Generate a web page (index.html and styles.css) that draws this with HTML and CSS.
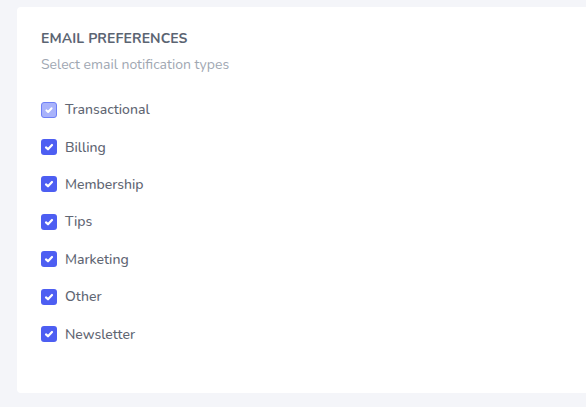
FILE: index.html
```html
<!DOCTYPE html>
<html>
<head>
<meta charset="utf-8">
<link rel="stylesheet" href="styles.css">
</head>
<body>
<div class="card">
  <h2 class="title">EMAIL PREFERENCES</h2>
  <p class="subtitle">Select email notification types</p>
  <ul class="options">
    <li class="option disabled"><span class="box"><svg viewBox="0 0 16 16"><path d="M5 8.4l2 1.9 4-4.3" /></svg></span>Transactional</li>
    <li class="option"><span class="box"><svg viewBox="0 0 16 16"><path d="M5 8.4l2 1.9 4-4.3" /></svg></span>Billing</li>
    <li class="option"><span class="box"><svg viewBox="0 0 16 16"><path d="M5 8.4l2 1.9 4-4.3" /></svg></span>Membership</li>
    <li class="option"><span class="box"><svg viewBox="0 0 16 16"><path d="M5 8.4l2 1.9 4-4.3" /></svg></span>Tips</li>
    <li class="option"><span class="box"><svg viewBox="0 0 16 16"><path d="M5 8.4l2 1.9 4-4.3" /></svg></span>Marketing</li>
    <li class="option"><span class="box"><svg viewBox="0 0 16 16"><path d="M5 8.4l2 1.9 4-4.3" /></svg></span>Other</li>
    <li class="option"><span class="box"><svg viewBox="0 0 16 16"><path d="M5 8.4l2 1.9 4-4.3" /></svg></span>Newsletter</li>
  </ul>
</div>
</body>
</html>
```
FILE: styles.css
```css
html, body {
  margin: 0;
  padding: 0;
  background: #f4f5f9;
  font-family: "Nunito", Lato, "Open Sans", sans-serif;
}
body {
  padding: 7px 0 0 17px;
}
.card {
  background: #ffffff;
  border-radius: 4px 0 0 4px;
  height: 386px;
  box-sizing: border-box;
  padding: 23px 24px 0 24px;
}
.title {
  margin: 0;
  font-size: 14px;
  line-height: 17px;
  font-weight: 700;
  color: #5b6472;
  letter-spacing: 0.1px;
}
.subtitle {
  margin: 9px 0 0 0;
  font-size: 14px;
  line-height: 17px;
  color: #a0a7b2;
}
.options {
  list-style: none;
  margin: 18px 0 0 0;
  padding: 0;
}
.option {
  display: flex;
  align-items: center;
  height: 37.4px;
  font-size: 14px;
  font-weight: 500;
  color: #5f6673;
}
.box {
  width: 16px;
  height: 16px;
  box-sizing: border-box;
  border-radius: 3px;
  background: #4d5ef2;
  margin-right: 8px;
  display: flex;
  align-items: center;
  justify-content: center;
  flex: none;
}
.box svg {
  width: 16px;
  height: 16px;
  fill: none;
  stroke: #ffffff;
  stroke-width: 2.2;
  stroke-linecap: round;
  stroke-linejoin: round;
}
.disabled .box {
  background: #a9b3fb;
  border: 1px solid #6f80f6;
}
.disabled .box svg {
  width: 14px;
  height: 14px;
}
```
